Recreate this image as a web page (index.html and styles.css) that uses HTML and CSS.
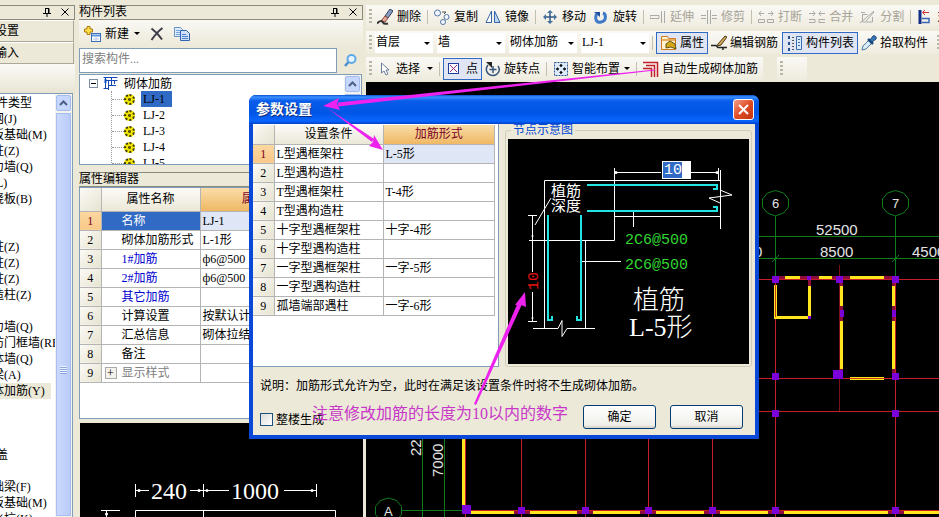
FILE: index.html
```html
<!DOCTYPE html>
<html lang="zh-CN">
<head>
    <meta charset="UTF-8">
    <meta name="viewport" content="width=device-width, initial-scale=1.0">
    <title>参数设置</title>
    <link rel="stylesheet" href="styles.css">
</head>
<body>
    <!-- Module navigation -->
    <aside class="nav">
        <div class="panel-title">
            <span class="title-icons">
                <svg width="8" height="9" viewBox="0 0 8 9"><path d="M2 0.5h4v5M2.5 0.5v5M5.5 0.5v5M0 5.5h8M4 5.5v3.5" fill="none" stroke="#000"/></svg>
                <svg width="8" height="8" viewBox="0 0 8 8"><path d="M0.5 0.5l7 7M7.5 0.5l-7 7" stroke="#000" fill="none"/></svg>
            </span>
        </div>
        <button class="nav-tab">工程设置</button>
        <button class="nav-tab">绘图输入</button>
        <div class="nav-strip"></div>
        <div class="nav-body">
            <ul class="nav-list">
                <li class="nav-root">构件类型</li>
                <li>轴网(J)</li>
                <li>筏板基础(M)</li>
                <li>框柱(Z)</li>
                <li>剪力墙(Q)</li>
                <li>梁(L)</li>
                <li>现浇板(B)</li>
                <li></li>
                <li></li>
                <li>框柱(Z)</li>
                <li>暗柱(Z)</li>
                <li>端柱(Z)</li>
                <li>构造柱(Z)</li>
                <li></li>
                <li>剪力墙(Q)</li>
                <li>人防门框墙(RF)</li>
                <li>砌体墙(Q)</li>
                <li>暗梁(A)</li>
                <li class="active">砌体加筋(Y)</li>
                <li></li>
                <li></li>
                <li></li>
                <li class="nav-cap">过梁盖</li>
                <li></li>
                <li>基础梁(F)</li>
                <li>筏板基础(M)</li>
                <li>集水坑(K)</li>
            </ul>
            <div class="scrollbar">
                <button class="scroll-up" aria-label="向上"><svg width="9" height="6" viewBox="0 0 9 6"><path d="M1 5l3.5-3.5L8 5" fill="none" stroke="#4d6185" stroke-width="2"/></svg></button>
                <div class="scroll-thumb"><i class="thumb-grip"></i></div>
            </div>
        </div>
    </aside>

    <!-- Component list and property editor -->
    <section class="side">
        <div class="panel-title">
            <span>构件列表</span>
            <span class="title-icons">
                <svg width="8" height="9" viewBox="0 0 8 9"><path d="M2 0.5h4v5M2.5 0.5v5M5.5 0.5v5M0 5.5h8M4 5.5v3.5" fill="none" stroke="#000"/></svg>
                <svg width="8" height="8" viewBox="0 0 8 8"><path d="M0.5 0.5l7 7M7.5 0.5l-7 7" stroke="#000" fill="none"/></svg>
            </span>
        </div>
        <div class="list-tools">
            <button class="tool">
                <svg width="17" height="16" viewBox="0 0 17 16"><path d="M3 0.5h3v2.5h2.5v3H6v2.5H3V6H0.5V3H3z" fill="#ffe04a" stroke="#a87a10"/><rect x="7.5" y="7.5" width="9" height="8" fill="#fff" stroke="#3c6eb8"/><path d="M8 8.5h8v2H8z" fill="#5b93dc"/><path d="M9 13h6M12 10v5" stroke="#b8c8e4"/></svg>
                <span>新建</span><i class="caret"></i>
            </button>
            <button class="tool" aria-label="删除"><svg width="14" height="14" viewBox="0 0 14 14"><path d="M1.5 1.5C5 4 9 8 12 12.5M12.5 1C8 4 5 8 1.5 13" fill="none" stroke="#3c3c48" stroke-width="2"/></svg></button>
            <button class="tool" aria-label="复制"><svg width="16" height="14" viewBox="0 0 16 14"><path d="M0.5 0.5h6l2 2v7h-8z" fill="#dcebfc" stroke="#6b93c9"/><path d="M2 3.5h4M2 5.5h4M2 7.5h4" stroke="#7ba4dc"/><path d="M6.5 3.5h6l3 3v7h-9z" fill="#cfe2fa" stroke="#2f62b0"/><path d="M8 7.5h4M8 9.5h6M8 11.5h6" stroke="#4b80cc"/></svg></button>
        </div>
        <div class="search-row">
            <input class="search" type="text" placeholder="搜索构件..." aria-label="搜索构件">
            <button class="search-btn" aria-label="搜索"><svg width="13" height="13" viewBox="0 0 13 13"><circle cx="7.5" cy="5" r="4" fill="#e6f4ff" stroke="#5fa8e6" stroke-width="2"/><path d="M4.5 8L1 12" stroke="#4a8ed0" stroke-width="2.5"/></svg></button>
        </div>
        <div class="tree">
            <div class="tree-root">
                <span class="expander"></span>
                <svg width="15" height="15" viewBox="0 0 15 15"><path d="M1 3h3v4H1z" fill="#7fa9e8"/><path d="M0.5 1.5h14M2.5 4.5h12M2.5 1v11M5.5 4v10M0.5 12.5h5M8.5 1v9M5 9.5h8M11.5 4v4" fill="none" stroke="#1648b4"/></svg>
                <span>砌体加筋</span>
            </div>
            <ul class="tree-items">
                <li><i class="gear"></i><span class="selected">LJ-1</span></li>
                <li><i class="gear"></i><span>LJ-2</span></li>
                <li><i class="gear"></i><span>LJ-3</span></li>
                <li><i class="gear"></i><span>LJ-4</span></li>
                <li><i class="gear"></i><span>LJ-5</span></li>
            </ul>
            <div class="scrollbar">
                <button class="scroll-up" aria-label="向上"><svg width="9" height="6" viewBox="0 0 9 6"><path d="M1 5l3.5-3.5L8 5" fill="none" stroke="#4d6185" stroke-width="2"/></svg></button>
                <div class="scroll-thumb"></div>
            </div>
        </div>
        <div class="panel-title editor-title"><span>属性编辑器</span></div>
        <div class="props">
            <table class="grid">
                <thead>
                    <tr><th class="num"></th><th class="prop-name">属性名称</th><th class="hot">属性值</th></tr>
                </thead>
                <tbody>
                    <tr class="current"><th class="num">1</th><td class="picked">名称</td><td>LJ-1</td></tr>
                    <tr><th class="num">2</th><td>砌体加筋形式</td><td>L-1形</td></tr>
                    <tr><th class="num">3</th><td class="blue">1#加筋</td><td>ф6@500</td></tr>
                    <tr><th class="num">4</th><td class="blue">2#加筋</td><td>ф6@500</td></tr>
                    <tr><th class="num">5</th><td class="blue">其它加筋</td><td></td></tr>
                    <tr><th class="num">6</th><td>计算设置</td><td>按默认计算设置计算</td></tr>
                    <tr><th class="num">7</th><td>汇总信息</td><td>砌体拉结筋</td></tr>
                    <tr><th class="num">8</th><td>备注</td><td></td></tr>
                    <tr><th class="num">9</th><td class="group"><span class="plus">+</span>显示样式</td><td></td></tr>
                </tbody>
            </table>
        </div>
        <div class="preview">
            <svg width="284" height="94" viewBox="80 423 284 94">
                <g stroke="#fff" fill="none">
                    <path d="M135.5 484v13M203.5 484v13M316.5 484v13M135 490.5h14M190 490.5h39M284 490.5h32"/>
                    <path d="M101 510.5h19M106.5 511v6M135.5 517v-6.5H335.5v6.5M203.5 511v6"/>
                </g>
                <g fill="#fff"><circle cx="139" cy="490.5" r="1.5"/><circle cx="199" cy="490.5" r="1.5"/><circle cx="207" cy="490.5" r="1.5"/><circle cx="312" cy="490.5" r="1.5"/><circle cx="106.5" cy="514" r="1.5"/></g>
                <text class="cad-serif" x="151" y="499">240</text>
                <text class="cad-serif" x="231" y="499">1000</text>
            </svg>
        </div>
    </section>

    <!-- Drawing area -->
    <main class="work">
        <div class="toolbars">
            <div class="bar edit-bar">
                <i class="grip"></i>
                <button class="tool"><svg width="16" height="16" viewBox="0 0 16 16"><path d="M8 7l5-7 3 2-5 7z" fill="#8a9ec4" stroke="#2d3c5a"/><path d="M8 7l3 2-3 4-4-1z" fill="#e2a898" stroke="#8c4638"/><path d="M0 14.5c3-3 5-3 6-1s3 1.500 5 1" fill="none" stroke="#333" stroke-width="2"/></svg><span>删除</span></button>
                <i class="sep"></i>
                <button class="tool"><svg width="16" height="16" viewBox="0 0 16 16"><g fill="#f4f8ff" stroke="#5574a4"><circle cx="3.5" cy="4" r="3"/><circle cx="12.5" cy="8" r="2.5"/><circle cx="9" cy="13" r="2.5"/></g><path d="M8 3h4l-2 2" fill="none" stroke="#555"/></svg><span>复制</span></button>
                <button class="tool"><svg width="16" height="16" viewBox="0 0 16 16"><path d="M6.5 2v11.5H1z" fill="#fff" stroke="#3566ac"/><path d="M9.5 2v11.5H15z" fill="#bfd4f2" stroke="#3566ac"/></svg><span>镜像</span></button>
                <i class="sep"></i>
                <button class="tool"><svg width="16" height="16" viewBox="0 0 16 16"><path d="M8 2v12M2 8h12" stroke="#315a88" stroke-width="1.5"/><path d="M8 1l3 3H5zM8 15l3-3H5zM1 8l3-3v6zM15 8l-3-3v6z" fill="#46719c"/></svg><span>移动</span></button>
                <button class="tool"><svg width="16" height="16" viewBox="0 0 16 16"><path d="M3.5 5C1 12 5 14 8 13c6-1 5-8 2-9" fill="none" stroke="#3e78c8" stroke-width="3"/><path d="M1 3h6v5z" fill="#214f9c"/></svg><span>旋转</span></button>
                <i class="sep"></i>
                <button class="tool" disabled><svg width="16" height="16" viewBox="0 0 16 16"><path d="M0 6.5h9v3H0zM11.5 2v12M14.5 2v12" fill="none" stroke="#aaa"/></svg><span>延伸</span></button>
                <button class="tool" disabled><svg width="16" height="16" viewBox="0 0 16 16"><path d="M0 6.5h5M0 9.5h5M6.5 1v14M9.5 1v14M11 6.5h5M11 9.5h5" fill="none" stroke="#aaa"/></svg><span>修剪</span></button>
                <i class="sep"></i>
                <button class="tool" disabled><svg width="16" height="16" viewBox="0 0 16 16"><path d="M1 4.5h5M3 2L1 4.5 3 7M10 4.5h5M13 2l2 2.5L13 7M0.5 10.5h6v3h-6zM9.5 10.5h6v3h-6z" fill="none" stroke="#aaa"/></svg><span>打断</span></button>
                <button class="tool" disabled><svg width="16" height="16" viewBox="0 0 16 16"><path d="M0 4.5h6M4 2l2 2.5L4 7M10 4.5h6M12 2l-2 2.5L12 7M0 10.5h6v3H0M16 10.5h-6v3h6" fill="none" stroke="#aaa"/></svg><span>合并</span></button>
                <button class="tool" disabled><svg width="16" height="16" viewBox="0 0 16 16"><path d="M2.5 5.5h5M2.5 5v8h10V8M0 14L14 2M6 12l8-9M1 3.5h4" fill="none" stroke="#aaa"/></svg><span>分割</span></button>
                <i class="sep"></i>
                <button class="tool"><svg width="16" height="16" viewBox="0 0 16 16"><path d="M3 1v14" stroke="#102c84" stroke-width="3"/><path d="M5 9.5h7v4H5" fill="none" stroke="#3865b8" stroke-width="1.5"/><path d="M6 3.5h6M8 1L5.5 3.5 8 6" fill="none" stroke="#d43030"/></svg><span>对齐</span></button>
            </div>
            <div class="bar">
                <i class="grip"></i>
                <label class="combo short"><select aria-label="楼层"><option>首层</option></select></label>
                <label class="combo"><select aria-label="构件分类"><option>墙</option></select></label>
                <label class="combo"><select aria-label="构件类型"><option>砌体加筋</option></select></label>
                <label class="combo"><select aria-label="构件"><option>LJ-1</option></select></label>
                <i class="sep"></i>
                <button class="tool pressed"><svg width="16" height="16" viewBox="0 0 16 16"><path d="M0.5 1.5h6l1 2h7v11h-14z" fill="#fff2cc" stroke="#d07b22"/><path d="M1 5h13" stroke="#e8ae5c" stroke-width="2"/><path d="M5 9l4-3 5 3 1 5-5-2-5 1z" fill="#d6aa16" stroke="#5a5320"/></svg><span>属性</span></button>
                <button class="tool"><svg width="16" height="16" viewBox="0 0 16 16"><path d="M0 10.5h5l2 2h9M12 13v2" fill="none" stroke="#222" stroke-width="1.5"/><path d="M7 9l7-8 2 1-6 8-4 1z" fill="#d4aa58" stroke="#4a391c"/></svg><span>编辑钢筋</span></button>
                <button class="tool pressed"><svg width="16" height="16" viewBox="0 0 16 16"><path d="M1 2.5h2M1 8.5h2M1 14.5h2" stroke="#224f96" stroke-width="3"/><path d="M5 2.5h2M5 5.5h2M5 8.5h2M5 11.5h2M5 14.5h2" stroke="#556"/><path d="M9.5 1.5h5v13h-5z" fill="#d9eafd" stroke="#3b6dae"/><path d="M11 4.5h2M11 7.5h2M11 10.5h2" stroke="#3b6dae"/></svg><span>构件列表</span></button>
                <button class="tool"><svg width="16" height="16" viewBox="0 0 16 16"><path d="M1 15l1-4 6-6 3 3-6 6z" fill="#d8ecfb" stroke="#517b9c"/><path d="M7 4l5 5" stroke="#1b477c" stroke-width="2.5"/><path d="M9 5l3-4c2-1 4 1 3 3l-4 3z" fill="#3976b4" stroke="#1b477c"/></svg><span>拾取构件</span></button>
                <i class="grip end"></i>
            </div>
            <div class="bar-line">
                <div class="bar">
                    <i class="grip"></i>
                    <button class="tool"><svg width="16" height="16" viewBox="0 0 16 16"><path d="M4.5 2v10l2.500-2 2 4 2-1-2-4h3z" fill="#fff" stroke="#6a7c9c"/></svg><span>选择</span><i class="caret far"></i></button>
                    <i class="sep"></i>
                    <button class="tool pressed point"><svg width="11" height="11" viewBox="0 0 11 11"><rect x="0.5" y="0.5" width="10" height="10" fill="#fff" stroke="#1c3fa0"/><path d="M2 2l7 7M9 2L2 9" stroke="#8b2a86"/></svg><span>点</span></button>
                    <button class="tool"><svg width="16" height="16" viewBox="0 0 16 16"><path d="M3 4C-1 9 3 14.5 8 14.500S16 9 13 5M8 5v7M4.500 8.500h7" fill="none" stroke="#36557c" stroke-width="1.5"/><path d="M1 1h6v6z" fill="#222"/></svg><span>旋转点</span></button>
                    <i class="sep"></i>
                    <button class="tool"><svg width="16" height="16" viewBox="0 0 16 16"><rect x="1.5" y="1.5" width="13" height="13" fill="#dceafa" stroke="#2e588e" stroke-dasharray="2 1"/><path d="M8 3v3M8 10v3M3 8h3M10 8h3" stroke="#111" stroke-width="1.5"/><path d="M6.500 4.500h3M6.500 11.500h3M4.500 6.500v3M11.500 6.500v3" stroke="#111"/></svg><span>智能布置</span><i class="caret"></i></button>
                    <i class="sep"></i>
                    <button class="tool"><svg width="16" height="16" viewBox="0 0 16 16"><path d="M0 1.5h14.5V16M3 4.5h8.5V16M0 7.5h8.5V16" fill="none" stroke="#c4202c" stroke-width="1.5"/></svg><span>自动生成砌体加筋</span></button>
                </div>
                <div class="bar stub"><i class="grip"></i></div>
            </div>
        </div>
        <div class="canvas">
            <svg width="573" height="435" viewBox="366 82 573 435">
                <g stroke="#0d7d1c" fill="none">
                    <path d="M775.5 216v64M895.5 216v64M750 236.5h189M750 258.5h189M772 262l7-7M892 262l7-7"/>
                    <path d="M422.5 430v87M444.5 430v87M402 510.5h64"/>
                    <path d="M775.5 190.5l8 2.5 5 6v8l-5 6-8 3-8-3-5-6v-8l5-6zM895.5 190.5l8 2.5 5 6v8l-5 6-8 3-8-3-5-6v-8l5-6zM388.5 498l8 2.5 5 6v8l-5 6-8 3-8-3-5-6v-8l5-6z"/>
                </g>
                <g stroke="#c81e28" fill="none">
                    <path d="M750 279.5h189M750 378.5h189M750 411.5h189M775.5 280v237M895.5 280v237"/>
                    <path d="M839.5 265v146" stroke="#7d0f16"/>
                    <path d="M521.5 430v87M585.5 430v87M648.5 430v87M712.5 430v87M465.5 430v87"/>
                </g>
                <!-- walls -->
                <g stroke="#8c0c3c" stroke-width="3"><path d="M775 277.5h120M841.5 280v98M893.5 280v98M809.5 280v38"/></g>
                <g stroke="#ffe61e" stroke-width="3" fill="none">
                    <path d="M785 277.5h15M819 277.5h13M850 277.5h34M775.5 285v32.5h34V286M841.5 286v20M841.5 321v48M893.5 286v20M893.5 321v48M850 378.5h34"/>
                    <path d="M463.5 430v76M467 512.5h472"/>
                </g>
                <path d="M775.5 285v32M850 378.5h34" stroke="#c83c14"/>
                <path d="M466 510.5h473" stroke="#c81e1e"/>
                <path d="M514 512.5h16M577 512.5h16M640 512.5h16M704 512.5h16M768 512.5h16M888 512.5h16" stroke="#8c0c3c" stroke-width="3"/>
                <g fill="#7c00d8">
                    <path d="M772 276h7v7h-7zM807 276h4v4h-4zM836 276h7v7h-7zM892 276h7v7h-7zM808 316h3v3h-3zM840 310h4v7h-4zM892 310h4v7h-4zM772 373h7v7h-7zM833 370h10v9h-10zM892 373h7v7h-7zM772 410h7v7h-7zM892 410h7v7h-7z"/>
                    <path d="M462 505h9v9h-9zM518 507h7v7h-7zM582 507h7v7h-7zM645 507h7v7h-7zM709 507h7v7h-7zM772 507h7v7h-7zM892 507h7v7h-7z"/>
                </g>
                <g class="cad-text">
                    <text x="816" y="235">52500</text>
                    <text x="820" y="257">8500</text>
                    <text x="912" y="257">4500</text>
                    <text x="729" y="257">8500</text>
                    <text x="772" y="208" class="axis">6</text>
                    <text x="892" y="208" class="axis">7</text>
                    <text x="384" y="516" class="axis">A</text>
                    <text transform="translate(421 456) rotate(-90)">22500</text>
                    <text transform="translate(443 477) rotate(-90)">7000</text>
                </g>
            </svg>
        </div>
    </main>

    <!-- Parameter dialog -->
    <div class="dialog" role="dialog" aria-labelledby="dlg-title">
        <div class="dialog-title">
            <h1 id="dlg-title">参数设置</h1>
            <button class="close" aria-label="关闭"><svg width="13" height="13" viewBox="0 0 13 13"><path d="M2 2l9 9M11 2l-9 9" stroke="#fff" stroke-width="2"/></svg></button>
        </div>
        <div class="dialog-body">
            <div class="dialog-top">
                <div class="conditions">
                    <table class="grid">
                        <thead>
                            <tr><th class="num"></th><th class="cond">设置条件</th><th class="hot">加筋形式</th></tr>
                        </thead>
                        <tbody>
                            <tr class="current"><th class="num">1</th><td>L型遇框架柱</td><td>L-5形</td></tr>
                            <tr><th class="num">2</th><td>L型遇构造柱</td><td></td></tr>
                            <tr><th class="num">3</th><td>T型遇框架柱</td><td>T-4形</td></tr>
                            <tr><th class="num">4</th><td>T型遇构造柱</td><td></td></tr>
                            <tr><th class="num">5</th><td>十字型遇框架柱</td><td>十字-4形</td></tr>
                            <tr><th class="num">6</th><td>十字型遇构造柱</td><td></td></tr>
                            <tr><th class="num">7</th><td>一字型遇框架柱</td><td>一字-5形</td></tr>
                            <tr><th class="num">8</th><td>一字型遇构造柱</td><td></td></tr>
                            <tr><th class="num">9</th><td>孤墙端部遇柱</td><td>一字-6形</td></tr>
                        </tbody>
                    </table>
                </div>
                <fieldset class="sketch">
                    <legend>节点示意图</legend>
                    <div class="node">
                        <svg width="241" height="225" viewBox="508 139 241 225">
                            <g stroke="#fff" fill="none">
                                <path d="M544.5 328V180.5h176M614.5 168v72.5H529M614 216.5h106M585.5 240v88M720.5 170v59"/>
                                <path d="M614 172.5h47M691 172.5h28M718.5 168v12M720 190l12 5-23 3 11 5"/>
                                <path d="M633.5 212v15M582 261.5h39M532.5 215v57M532.5 292v30M528 215.5h9M528 321.5h9M535 225l16-27"/>
                                <path d="M533 328.5h25l4-8v16l5-8h28"/>
                            </g>
                            <g fill="#fff"><circle cx="616" cy="172.5" r="1.5"/><circle cx="717" cy="172.5" r="1.5"/><circle cx="532.5" cy="236" r="1"/><circle cx="532.5" cy="318" r="1"/></g>
                            <path d="M587 185h130v4h-4M587 211h130v-4h-4M548 215v105h4v-4M581 215v105h-4v-4" stroke="#25e3e3" stroke-width="2" fill="none"/>
                            <g class="node-text">
                                <text x="551" y="196">植筋</text>
                                <text x="551" y="211">深度</text>
                                <text class="green" x="625" y="244">2C6@500</text>
                                <text class="green" x="625" y="269">2C6@500</text>
                                <text class="red" transform="translate(538 290) rotate(-90)">10</text>
                                <text class="big" x="633" y="309">植筋</text>
                                <text class="big" x="629" y="336">L-5形</text>
                            </g>
                        </svg>
                        <input class="dim-input" type="text" value="10" aria-label="植筋长度">
                    </div>
                </fieldset>
            </div>
            <p class="note">说明：加筋形式允许为空，此时在满足该设置条件时将不生成砌体加筋。</p>
            <div class="dialog-foot">
                <label class="check"><input type="checkbox">整楼生成</label>
                <div class="actions">
                    <button class="btn">确定</button>
                    <button class="btn">取消</button>
                </div>
            </div>
        </div>
    </div>

    <!-- Arrows and remark over the window -->
    <svg class="marks" width="939" height="517" viewBox="0 0 939 517">
        <g fill="#ee22ee">
            <path d="M655 69.5L338 102.5v4L655 70.5z"/>
            <path d="M323 106l16-8-2 6 3 6z"/>
            <path d="M326 107l46 35 2-3z"/>
            <path d="M383 150l-14-4 4-4 1-7z"/>
            <path d="M474 404l45-104 4 2-47 103z"/>
            <path d="M525 292l1 15-5-2-6 0z"/>
        </g>
        <text class="remark" x="312" y="419">注意修改加筋的长度为10以内的数字</text>
    </svg>
</body>
</html>
```
FILE: styles.css
```css
* {
    box-sizing: border-box;
}
body {
    position: relative;
    display: flex;
    gap: 4px;
    height: 100vh;
    margin: 0;
    overflow: hidden;
    background-color: #ece9d8;
    color: #000;
    font-family: "Liberation Serif", "Noto Sans CJK SC", serif;
    font-size: 12px;
    line-height: 16px;
}
button, input, select {
    margin: 0;
    padding: 0;
    border: 0;
    background: none;
    color: inherit;
    font: inherit;
}
ul {
    margin: 0;
    padding: 0;
    list-style: none;
}
svg {
    display: block;
    flex: none;
}

/* docked panels */
.panel-title {
    display: flex;
    flex: none;
    align-items: center;
    justify-content: space-between;
    height: 15px;
    padding-right: 5px;
    border: 1px solid #8c8a7c;
    border-left: 0;
    line-height: 13px;
}
.title-icons {
    display: flex;
    gap: 10px;
    margin-left: auto;
}
.nav {
    display: flex;
    flex: none;
    flex-direction: column;
    width: 75px;
    padding-top: 5px;
}
.nav-tab {
    flex: none;
    height: 22px;
    margin-right: 1px;
    padding-right: 54px;
    direction: rtl;
    overflow: hidden;
    border-top: 1px solid #fff;
    border-right: 1px solid #aca899;
    border-bottom: 1px solid #aca899;
    white-space: nowrap;
}
.nav-strip {
    flex: none;
    height: 29px;
    background: linear-gradient(#fbfaf7, #e8e4d4);
}
.nav-body {
    display: flex;
    flex: 1;
    min-height: 0;
    margin-right: 2px;
    border-top: 1px solid #7f9db9;
    border-right: 1px solid #7f9db9;
    background-color: #fff;
}
.nav-list {
    flex: 1;
    min-width: 0;
    padding-top: 1px;
    overflow: hidden;
    white-space: nowrap;
}
.nav-list li {
    width: 71px;
    height: 16px;
    margin-left: -20px;
}
.nav-list .nav-root {
    margin-left: -16px;
}
.nav-list .nav-cap {
    margin-left: -28px;
}
.nav-list .active {
    background-color: #ece9d8;
}
.scrollbar {
    display: flex;
    flex: none;
    flex-direction: column;
    gap: 2px;
    width: 17px;
    padding: 1px;
    background-color: #f3f3ee;
}
.scroll-up {
    display: flex;
    flex: none;
    align-items: center;
    justify-content: center;
    height: 16px;
    border: 1px solid #a3bbef;
    border-radius: 2px;
    background-color: #c6d6fc;
}
.scroll-thumb {
    display: flex;
    flex: 1;
    align-items: flex-start;
    justify-content: center;
    padding-top: 252px;
    border: 1px solid #a8bdf0;
    background: linear-gradient(90deg, #cbd9fd, #b9cbf8);
}
.thumb-grip {
    width: 7px;
    height: 8px;
    background: repeating-linear-gradient(#eef4fe 0 1px, #8ca6e4 1px 2px);
}
.side {
    display: flex;
    flex: none;
    flex-direction: column;
    width: 284px;
    padding-top: 5px;
}
.list-tools {
    display: flex;
    flex: none;
    align-items: center;
    gap: 10px;
    height: 27px;
    padding-left: 5px;
    background: linear-gradient(#f9f8f4, #ece9d8);
}
.search-row {
    display: flex;
    flex: none;
    height: 25px;
    margin: 1px 0;
}
.search {
    flex: 1;
    min-width: 0;
    margin-right: 7px;
    padding: 0 2px 4px;
    border: 1px solid #7f9db9;
    background-color: #fff;
}
.search::placeholder {
    color: #808080;
}
.search-btn {
    width: 19px;
}
.tree {
    position: relative;
    flex: none;
    height: 91px;
    padding: 1px 0 0 9px;
    margin-right: 1px;
    overflow: hidden;
    border: 1px solid #7f9db9;
    background-color: #fff;
}
.tree .scrollbar {
    position: absolute;
    top: 0;
    right: 0;
    bottom: 0;
}
.tree .scroll-thumb {
    padding-top: 0;
}
.tree-root {
    display: flex;
    align-items: center;
    gap: 6px;
    height: 15px;
}
.expander {
    width: 9px;
    height: 9px;
    margin-right: -1px;
    border: 1px solid #7b8ea8;
    background: linear-gradient(#000, #000) center / 5px 1px no-repeat;
}
.tree-items {
    margin-left: 22px;
    border-left: 1px dotted #999;
}
.tree-items li {
    display: flex;
    align-items: center;
    height: 16px;
}
.tree-items li::before {
    content: "";
    width: 12px;
    border-top: 1px dotted #999;
}
.tree-items span {
    width: 31px;
    margin-left: 6px;
    padding-left: 2px;
}
.tree-items .selected {
    background-color: #316ac5;
}
.gear {
    width: 11px;
    height: 11px;
    border: 2px dotted #3a3a00;
    border-radius: 50%;
    background: radial-gradient(#5a5400 1px, #f0e400 2px);
}
.editor-title {
    margin-top: 7px;
}
.props {
    flex: none;
    height: 232px;
    border: 1px solid #7f9db9;
    background-color: #fff;
}

/* grids */
.grid {
    width: 100%;
    border-collapse: collapse;
    table-layout: fixed;
}
.grid th, .grid td {
    height: 19px;
    padding: 0;
    overflow: hidden;
    border-right: 1px solid #b4b4b4;
    border-bottom: 1px solid #b4b4b4;
    font-weight: normal;
    white-space: nowrap;
}
.grid td {
    padding-left: 2px;
    text-align: left;
}
.grid thead th {
    background: linear-gradient(#fbfaf6, #ebe8d8);
}
.grid .num {
    width: 21px;
    background: linear-gradient(135deg, #fbfaf6, #e6e3d0);
}
.grid thead .hot {
    background: linear-gradient(#f8dca8, #efb864);
    color: #780028;
}
.grid .current .num {
    background: linear-gradient(#fbd8a0, #f8c888);
    color: #780028;
}
.grid .current td:last-child {
    background-color: #dfe6f5;
}
.props .grid thead th {
    height: 23px;
}
.props .prop-name {
    width: 99px;
}
.props .grid thead .hot {
    padding-right: 42px;
}
.props .grid td:nth-child(2) {
    padding-left: 20px;
}
.props .grid .picked {
    background-color: #316ac5;
    color: #fff;
}
.props .grid .blue {
    color: #0000d0;
}
.props .grid td.group {
    padding-left: 3px;
    color: #808080;
}
.plus {
    display: inline-block;
    width: 12px;
    height: 12px;
    margin-right: 5px;
    border: 1px solid #aaa;
    background-color: #f4f2ea;
    color: #000;
    line-height: 10px;
    text-align: center;
}
.preview {
    flex: 1;
    min-height: 0;
    margin: 4px 0 0 1px;
    overflow: hidden;
    background-color: #000;
}

/* toolbars */
.work {
    display: flex;
    flex: 1;
    flex-direction: column;
    min-width: 0;
    margin-left: -1px;
}
.toolbars {
    display: flex;
    flex: none;
    flex-direction: column;
    gap: 3px;
    height: 82px;
    padding-top: 5px;
}
.bar-line {
    display: flex;
    gap: 14px;
}
.bar {
    display: flex;
    align-items: center;
    gap: 7px;
    height: 23px;
    padding-right: 5px;
    overflow: hidden;
    background: linear-gradient(#faf9f5, #efecde);
    white-space: nowrap;
}
.grip {
    flex: none;
    width: 3px;
    height: 15px;
    margin: 0 -2px 0 3px;
    background: repeating-linear-gradient(#b8b5a4 0 2px, transparent 2px 4px);
}
.grip.end {
    margin-left: 2px;
}
.sep {
    flex: none;
    width: 1px;
    height: 14px;
    margin: 0 -1px;
    background-color: #c2bfae;
}
.tool {
    display: flex;
    flex: none;
    align-items: center;
    gap: 3px;
    height: 22px;
}
.edit-bar .tool, .list-tools .tool {
    gap: 4px;
}
.tool:disabled {
    color: #a7a499;
}
.tool.pressed {
    margin: 0 -4px 0 -3px;
    padding: 0 3px 0 4px;
    border: 1px solid #316ac5;
    background-color: #dfe5f2;
}
.tool.point {
    gap: 7px;
}
.caret {
    margin-left: 1px;
    border: 3px solid transparent;
    border-top-color: #000;
    border-bottom: 0;
}
.caret.far {
    margin-left: 4px;
}
.combo {
    position: relative;
    flex: none;
    width: 68px;
    height: 20px;
    margin-right: -3px;
    background-color: #fff;
}
.combo.short {
    width: 58px;
    margin-left: -2px;
}
.combo select {
    width: 100%;
    height: 18px;
    padding-left: 1px;
    appearance: none;
}
.combo::after {
    content: "";
    position: absolute;
    top: 9px;
    right: 3px;
    border: 3px solid transparent;
    border-top-color: #000;
    border-bottom: 0;
    pointer-events: none;
}
.stub {
    width: 30px;
}
.canvas {
    flex: 1;
    min-height: 0;
    overflow: hidden;
    background-color: #000;
}

/* drawing text */
.cad-serif {
    fill: #fff;
    font-size: 24px;
}
.cad-text {
    fill: #e4e4e4;
    font-family: "Liberation Sans", sans-serif;
    font-size: 15px;
}
.cad-text .axis {
    font-size: 13px;
}
.node-text {
    fill: #fff;
    font-family: "Liberation Mono", "Noto Sans CJK SC", monospace;
    font-size: 15px;
}
.node-text .green {
    fill: #32d732;
}
.node-text .red {
    fill: #e61414;
}
.node-text .big {
    font-family: "Liberation Serif", "Noto Sans CJK SC", serif;
    font-size: 26px;
    font-weight: 300;
}

/* dialog */
.dialog {
    position: absolute;
    top: 95px;
    left: 249px;
    width: 510px;
    border: 4px solid #0a48d8;
    border-top: 0;
    border-radius: 7px 7px 0 0;
    background-color: #0a48d8;
}
.dialog-title {
    display: flex;
    align-items: center;
    justify-content: space-between;
    height: 29px;
    margin: 0 -4px;
    padding: 0 5px 0 7px;
    border-radius: 7px 7px 0 0;
    background: linear-gradient(#0a50d0, #3a90ff 2px, #0a5cea 6px, #0055e5 18px, #0a66ff 26px, #0040c8);
}
.dialog-title h1 {
    margin: 0;
    color: #fff;
    font-size: 14px;
    text-shadow: 1px 1px #0a2c80;
}
.close {
    display: flex;
    align-items: center;
    justify-content: center;
    width: 21px;
    height: 21px;
    border: 1px solid #fff;
    border-radius: 3px;
    background: linear-gradient(135deg, #f0a088, #e04c26 50%, #c03410);
}
.dialog-body {
    background-color: #ece9d8;
}
.dialog-top {
    display: flex;
    justify-content: space-between;
    padding-right: 3px;
}
.conditions {
    width: 246px;
    height: 243px;
    padding: 1px 3px 0 0;
    border-right: 1px solid #7f9db9;
    border-bottom: 1px solid #7f9db9;
    background-color: #fff;
}
.conditions .cond {
    width: 109px;
}
.sketch {
    height: 243px;
    margin: 0;
    padding: 0 2px;
    border: 1px solid #d0cdbc;
    border-radius: 3px;
}
.sketch legend {
    height: 12px;
    margin-left: 3px;
    padding: 0 2px;
    color: #0046d5;
    line-height: 12px;
}
.node {
    position: relative;
    margin-top: 3px;
    background-color: #000;
}
/* edit box that opens over the dimension text */
.dim-input {
    position: absolute;
    top: 22px;
    left: 154px;
    width: 29px;
    height: 18px;
    padding-left: 1px;
    border: 1px solid #fff;
    background: linear-gradient(90deg, #316ac5 19px, #fff 19px);
    color: #fff;
    font-family: "Liberation Mono", monospace;
    font-size: 15px;
}
.note {
    margin: 0;
    padding: 11px 7px 0;
}
.dialog-foot {
    display: flex;
    align-items: center;
    justify-content: space-between;
    padding: 11px 12px 6px 7px;
}
.check {
    display: flex;
    align-items: center;
    gap: 3px;
    margin-top: 5px;
}
.check input {
    width: 13px;
    height: 13px;
    appearance: none;
    border: 1px solid #1c5180;
    background: linear-gradient(135deg, #dcdcd7, #fff);
}
.actions {
    display: flex;
    gap: 14px;
}
.btn {
    width: 73px;
    height: 24px;
    border: 1px solid #003c74;
    border-radius: 3px;
    background: linear-gradient(#fff, #f0f0ea 85%, #d6d0c5);
}

/* annotations */
.marks {
    position: absolute;
    top: 0;
    left: 0;
    pointer-events: none;
}
.remark {
    fill: #c837c8;
    font-size: 16px;
}
```
